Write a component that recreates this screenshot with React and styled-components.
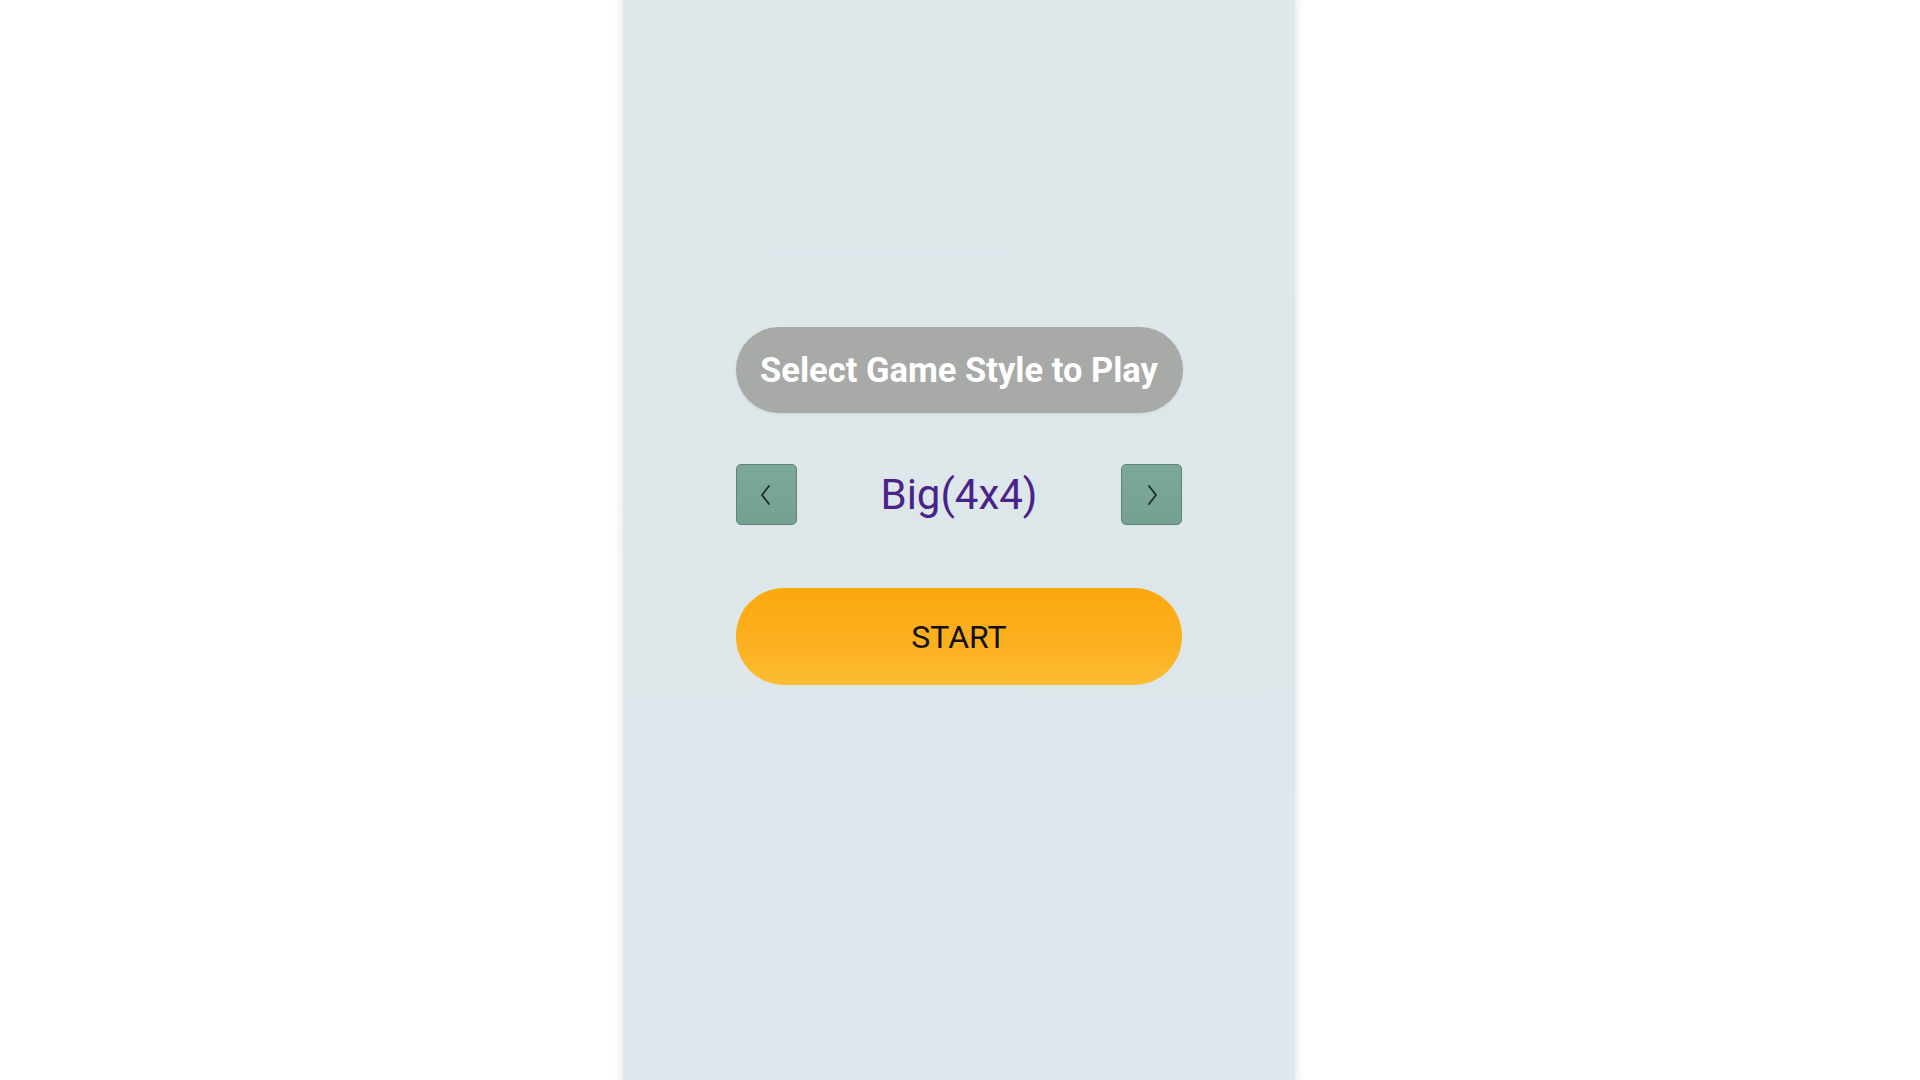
import React, { useState } from "react";
import styled, { createGlobalStyle } from "styled-components";

const GlobalStyle = createGlobalStyle`
    html, body {
        margin: 0;
        padding: 0;
        background: #ffffff;
        font-family: Roboto, "Liberation Sans", Arial, sans-serif;
    }
`;

const Page = styled.div`
    width: 100%;
    height: 100vh;
    display: flex;
    justify-content: center;
    background: #ffffff;
`;

const Screen = styled.div`
    width: 672px;
    height: 100%;
    margin-right: 2px;
    display: flex;
    flex-direction: column;
    align-items: center;
    padding-top: 327px;
    box-sizing: border-box;
    background: linear-gradient(180deg, #dfe7eb 0%, #dde7ea 50%, #dfe7ec 100%);
    box-shadow: 0 0 8px 2px rgba(222, 230, 236, 0.9);
`;

const TitlePill = styled.div`
    width: 447px;
    height: 86px;
    border-radius: 43px;
    background: #a8aaa7;
    color: #ffffff;
    font-size: 34.5px;
    font-weight: 700;
    display: flex;
    align-items: center;
    justify-content: center;
    box-shadow: 0 1px 3px rgba(0, 0, 0, 0.08);
`;

const Selector = styled.div`
    width: 447px;
    height: 61px;
    margin-top: 51px;
    display: flex;
    align-items: center;
    justify-content: space-between;
`;

const ArrowButton = styled.button`
    width: 61px;
    height: 61px;
    padding: 0;
    border: 1px solid #5f8376;
    border-radius: 5px;
    background: linear-gradient(180deg, #7ca898 0%, #75a192 100%);
    display: flex;
    align-items: center;
    justify-content: center;
    cursor: pointer;
`;

const SizeLabel = styled.div`
    font-size: 42px;
    color: #4a238a;
    line-height: 1;
`;

const StartButton = styled.button`
    width: 446px;
    height: 97px;
    margin-top: 63px;
    border: none;
    border-radius: 48px;
    background: linear-gradient(180deg, #fca80e 0%, #fcb020 60%, #fbbd32 100%);
    color: #111111;
    font-family: Roboto, "Liberation Sans", Arial, sans-serif;
    font-size: 32px;
    font-weight: 400;
    cursor: pointer;
`;

const Chevron = ({ dir }) => (
    <svg width="20" height="28" viewBox="0 0 20 28" fill="none">
        <path
            d={dir === "left" ? "M13 5 L6 14 L13 23" : "M7 5 L14 14 L7 23"}
            stroke="#1f2a26"
            strokeWidth="1.8"
            strokeLinecap="round"
            strokeLinejoin="round"
        />
    </svg>
);

const sizes = ["Small(3x3)", "Big(4x4)", "Huge(5x5)"];

export default function App() {
    const [index, setIndex] = useState(1);
    const prev = () => setIndex((index + sizes.length - 1) % sizes.length);
    const next = () => setIndex((index + 1) % sizes.length);

    return (
        <Page>
            <GlobalStyle />
            <Screen>
                <TitlePill>Select Game Style to Play</TitlePill>
                <Selector>
                    <ArrowButton onClick={prev}>
                        <Chevron dir="left" />
                    </ArrowButton>
                    <SizeLabel>{sizes[index]}</SizeLabel>
                    <ArrowButton onClick={next}>
                        <Chevron dir="right" />
                    </ArrowButton>
                </Selector>
                <StartButton>START</StartButton>
            </Screen>
        </Page>
    );
}
